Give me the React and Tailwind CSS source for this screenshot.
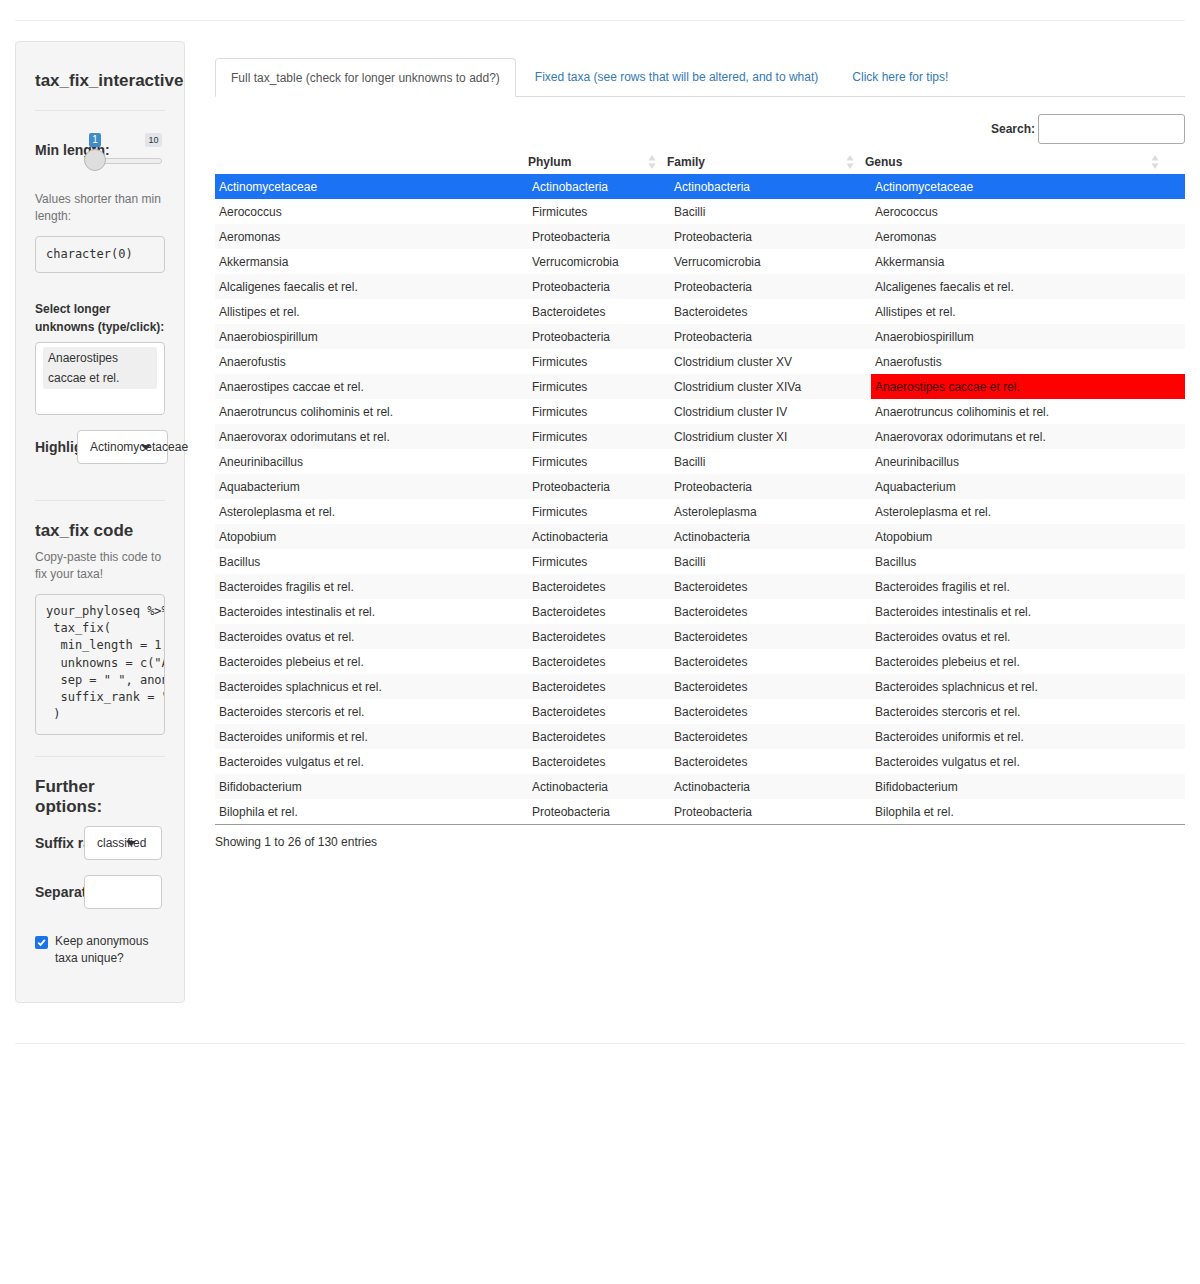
const rows = [
  ["Actinomycetaceae", "Actinobacteria", "Actinobacteria", "Actinomycetaceae"],
  ["Aerococcus", "Firmicutes", "Bacilli", "Aerococcus"],
  ["Aeromonas", "Proteobacteria", "Proteobacteria", "Aeromonas"],
  ["Akkermansia", "Verrucomicrobia", "Verrucomicrobia", "Akkermansia"],
  ["Alcaligenes faecalis et rel.", "Proteobacteria", "Proteobacteria", "Alcaligenes faecalis et rel."],
  ["Allistipes et rel.", "Bacteroidetes", "Bacteroidetes", "Allistipes et rel."],
  ["Anaerobiospirillum", "Proteobacteria", "Proteobacteria", "Anaerobiospirillum"],
  ["Anaerofustis", "Firmicutes", "Clostridium cluster XV", "Anaerofustis"],
  ["Anaerostipes caccae et rel.", "Firmicutes", "Clostridium cluster XIVa", "Anaerostipes caccae et rel."],
  ["Anaerotruncus colihominis et rel.", "Firmicutes", "Clostridium cluster IV", "Anaerotruncus colihominis et rel."],
  ["Anaerovorax odorimutans et rel.", "Firmicutes", "Clostridium cluster XI", "Anaerovorax odorimutans et rel."],
  ["Aneurinibacillus", "Firmicutes", "Bacilli", "Aneurinibacillus"],
  ["Aquabacterium", "Proteobacteria", "Proteobacteria", "Aquabacterium"],
  ["Asteroleplasma et rel.", "Firmicutes", "Asteroleplasma", "Asteroleplasma et rel."],
  ["Atopobium", "Actinobacteria", "Actinobacteria", "Atopobium"],
  ["Bacillus", "Firmicutes", "Bacilli", "Bacillus"],
  ["Bacteroides fragilis et rel.", "Bacteroidetes", "Bacteroidetes", "Bacteroides fragilis et rel."],
  ["Bacteroides intestinalis et rel.", "Bacteroidetes", "Bacteroidetes", "Bacteroides intestinalis et rel."],
  ["Bacteroides ovatus et rel.", "Bacteroidetes", "Bacteroidetes", "Bacteroides ovatus et rel."],
  ["Bacteroides plebeius et rel.", "Bacteroidetes", "Bacteroidetes", "Bacteroides plebeius et rel."],
  ["Bacteroides splachnicus et rel.", "Bacteroidetes", "Bacteroidetes", "Bacteroides splachnicus et rel."],
  ["Bacteroides stercoris et rel.", "Bacteroidetes", "Bacteroidetes", "Bacteroides stercoris et rel."],
  ["Bacteroides uniformis et rel.", "Bacteroidetes", "Bacteroidetes", "Bacteroides uniformis et rel."],
  ["Bacteroides vulgatus et rel.", "Bacteroidetes", "Bacteroidetes", "Bacteroides vulgatus et rel."],
  ["Bifidobacterium", "Actinobacteria", "Actinobacteria", "Bifidobacterium"],
  ["Bilophila et rel.", "Proteobacteria", "Proteobacteria", "Bilophila et rel."],
];

const codeLines = [
  "your_phyloseq %>%",
  " tax_fix(",
  "  min_length = 1,",
  '  unknowns = c("Anaerostipes caccae et rel."),',
  '  sep = " ", anon_unique = TRUE,',
  '  suffix_rank = "classified"',
  " )",
];

const mono = { fontFamily: '"DejaVu Sans Mono", "Liberation Mono", monospace' };

function SortIcon() {
  return (
    <svg width="8" height="16" viewBox="0 0 8 16" className="shrink-0">
      <path d="M4 1 L7.5 6.5 L0.5 6.5 Z" fill="#dcdcdc" />
      <path d="M4 15 L7.5 9.5 L0.5 9.5 Z" fill="#dcdcdc" />
    </svg>
  );
}

function Caret() {
  return (
    <svg width="10" height="6" viewBox="0 0 10 6" className="absolute">
      <path d="M0 0 L10 0 L5 5 Z" fill="#333" />
    </svg>
  );
}

function Sidebar() {
  return (
    <div className="w-[170px] shrink-0 bg-[#f5f5f5] border border-[#e3e3e3] rounded-[4px] px-[19px] pt-[19px] pb-[35px]">
      <h3 className="text-[17px] leading-[20px] font-bold text-[#333] mt-[10px] whitespace-nowrap">tax_fix_interactive</h3>
      <div className="h-px bg-[#e6e6e6] mt-[19px]" />

      {/* slider overlaps its label, as in the shiny app */}
      <div className="relative h-[50px] mt-[21px]">
        <div className="absolute left-0 top-[10px] text-[14px] leading-[16px] font-bold text-[#333]">Min length:</div>
        <div className="absolute left-[50px] top-[26px] w-[77px] h-[6px] rounded-full bg-[#eee] border border-[#ccc]" />
        <div className="absolute left-[49px] top-[17px] w-[22px] h-[22px] rounded-full bg-[#dedede] border border-[#b5b5b5]" />
        <div className="absolute left-[54px] top-[1px] w-[12px] h-[14px] rounded-[2px] bg-[#428bca] text-white text-[10px] leading-[14px] text-center">1</div>
        <div className="absolute left-[110px] top-[1px] w-[17px] h-[14px] rounded-[2px] bg-[#e1e4e9] text-[#333] text-[9px] leading-[14px] text-center">10</div>
      </div>

      <div className="mt-[9px] text-[12px] leading-[17px] text-[#737373]">Values shorter than min length:</div>
      <div className="mt-[11px] h-[37px] border border-[#ccc] rounded-[4px] bg-[#f5f5f5] px-[10px] text-[12px] leading-[35px] text-[#333]" style={mono}>character(0)</div>

      <div className="mt-[27px] text-[12px] leading-[18px] font-bold text-[#333]">Select longer unknowns (type/click):</div>
      <div className="mt-[6px] h-[73px] bg-white border border-[#ccc] rounded-[4px] px-[7px] pt-[4px]">
        <div className="bg-[#efefef] rounded-[3px] px-[5px] text-[12px] leading-[20px] text-[#333] py-px">Anaerostipes caccae et rel.</div>
      </div>

      <div className="mt-[15px] flex items-center h-[34px]">
        <div className="w-[42px] shrink-0 overflow-hidden whitespace-nowrap text-[14px] font-bold text-[#333]">Highlight:</div>
        <div className="relative w-[91px] shrink-0 h-[34px] bg-white border border-[#ccc] rounded-[4px] flex items-center pl-[12px] text-[12px] text-[#333] whitespace-nowrap">
          Actinomycetaceae
          <span className="absolute left-[63px] top-[14px]"><Caret /></span>
        </div>
      </div>

      <div className="h-px bg-[#e6e6e6] mt-[36px]" />
      <h3 className="mt-[20px] text-[17px] leading-[20px] font-bold text-[#333]">tax_fix code</h3>
      <div className="mt-[8px] text-[12px] leading-[17px] text-[#737373]">Copy-paste this code to fix your taxa!</div>
      <div className="mt-[11px] h-[141px] border border-[#ccc] rounded-[4px] bg-[#f5f5f5] pl-[10px] pt-[8px] overflow-hidden text-[12px] leading-[17.2px] text-[#333]" style={mono}>
        {codeLines.map((l, i) => (
          <div key={i} className="whitespace-pre">{l}</div>
        ))}
      </div>

      <div className="h-px bg-[#e6e6e6] mt-[21px]" />
      <h3 className="mt-[20px] w-[100px] text-[17px] leading-[20px] font-bold text-[#333]">Further options:</h3>
      <div className="mt-[9px] flex items-center h-[34px]">
        <div className="w-[49px] shrink-0 overflow-hidden whitespace-nowrap text-[14px] font-bold text-[#333]">Suffix rank:</div>
        <div className="relative w-[78px] shrink-0 h-[34px] bg-white border border-[#ccc] rounded-[4px] flex items-center pl-[12px] text-[12px] text-[#333] whitespace-nowrap">
          classified
          <span className="absolute left-[41px] top-[14px]"><Caret /></span>
        </div>
      </div>
      <div className="mt-[15px] flex items-center h-[34px]">
        <div className="w-[49px] shrink-0 overflow-hidden whitespace-nowrap text-[14px] font-bold text-[#333]">Separator:</div>
        <div className="w-[78px] shrink-0 h-[34px] bg-white border border-[#ccc] rounded-[4px]" />
      </div>
      <div className="mt-[24px] flex items-start gap-[7px]">
        <div className="mt-[3px] w-[13px] h-[13px] rounded-[2px] bg-[#1a73e8] flex items-center justify-center shrink-0">
          <svg width="9" height="9" viewBox="0 0 9 9">
            <path d="M1.2 4.6 L3.5 6.9 L7.8 1.8" stroke="white" strokeWidth="1.8" fill="none" />
          </svg>
        </div>
        <div className="text-[12px] leading-[17px] text-[#333]">Keep anonymous taxa unique?</div>
      </div>
    </div>
  );
}

function Main() {
  const bodyW = ["w-[313px]", "w-[142px]", "w-[201px]", "w-[314px]"];
  return (
    <div className="flex-1 min-w-0 pt-[17px]">
      <div className="flex border-b border-[#ddd] h-[39px] text-[12px]">
        <div className="px-[15px] h-[39px] -mb-px bg-white border border-[#ddd] border-b-white rounded-t-[4px] mr-[2px] flex items-center text-[#555]">
          Full tax_table (check for longer unknowns to add?)
        </div>
        <div className="px-[17px] flex items-center text-[#337ab7]">Fixed taxa (see rows that will be altered, and to what)</div>
        <div className="px-[17px] flex items-center text-[#337ab7]">Click here for tips!</div>
      </div>

      <div className="flex justify-end items-center mt-[17px] h-[30px]">
        <span className="text-[12px] font-bold text-[#333] mr-[3px]">Search:</span>
        <div className="w-[147px] h-[30px] border border-[#aaa] rounded-[3px] bg-white" />
      </div>

      <div className="mt-[6px] flex w-[955px] h-[25px] border-b border-[#999] text-[12px] font-bold text-[#333]">
        <div className="w-[303px]" />
        <div className="w-[139px] flex items-center justify-between pl-[10px] pr-[1px]">Phylum<SortIcon /></div>
        <div className="w-[198px] flex items-center justify-between pl-[10px] pr-[1px]">Family<SortIcon /></div>
        <div className="w-[315px] flex items-center justify-between pl-[10px] pr-[11px]">Genus<SortIcon /></div>
      </div>

      <div className="border-b border-[#999] -mt-px">
        {rows.map((r, i) => {
          const sel = i === 0;
          const bg = sel ? "bg-[#1b72f2] text-white" : i % 2 === 0 ? "bg-[#f9f9f9] text-[#333]" : "bg-white text-[#333]";
          return (
            <div key={i} className={`flex h-[25px] text-[12px] ${bg}`}>
              {r.map((c, j) => {
                const red = i === 8 && j === 3;
                return (
                  <div key={j} className={`${bodyW[j]} pl-[4px] flex items-center whitespace-nowrap ${red ? "bg-[#ff0000] text-[#3a0000]" : ""}`}>
                    {c}
                  </div>
                );
              })}
            </div>
          );
        })}
      </div>
      <div className="mt-[8px] text-[12px] text-[#333]">Showing 1 to 26 of 130 entries</div>
    </div>
  );
}

export default function App() {
  return (
    <div className="px-[15px] bg-white min-h-[1284px]" style={{ fontFamily: '"Liberation Sans", Arial, sans-serif' }}>
      <div className="h-[20px]" />
      <div className="h-px bg-[#eee]" />
      <div className="flex gap-[30px] mt-[20px]">
        <Sidebar />
        <Main />
      </div>
      <div className="h-px bg-[#eee] mt-[40px]" />
    </div>
  );
}
